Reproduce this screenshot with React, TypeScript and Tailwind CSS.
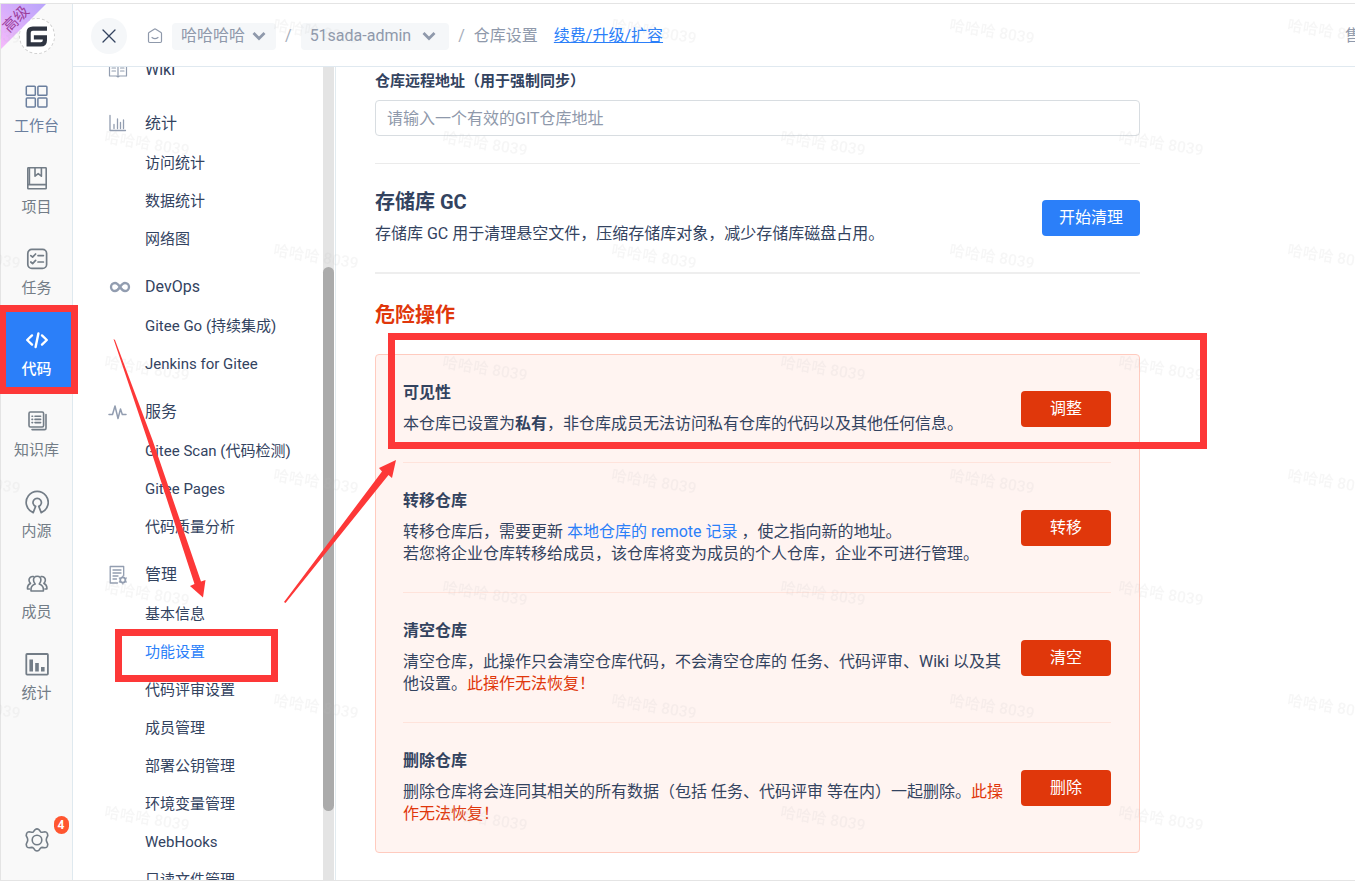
import React from "react";

type IconProps = { className?: string; children: React.ReactNode; box?: number; width?: number };

function Icon({ className = "size-6", children, box = 24, width = 2 }: IconProps) {
  return (
    <svg
      viewBox={`0 0 ${box} ${box}`}
      className={className}
      fill="none"
      stroke="currentColor"
      strokeWidth={width}
      strokeLinecap="round"
      strokeLinejoin="round"
      aria-hidden="true"
    >
      {children}
    </svg>
  );
}

const railItems = [
  {
    label: "工作台",
    tone: "text-[#6b7f9e]",
    icon: (
      <Icon width={1.5}>
        <rect x="1.3" y="1.3" width="9" height="9" rx="0.8" />
        <rect x="12.900" y="1.3" width="9" height="9" rx="0.8" />
        <rect x="1.3" y="12.900" width="9" height="9" rx="0.8" />
        <rect x="12.900" y="12.900" width="9" height="9" rx="0.8" />
      </Icon>
    ),
  },
  {
    label: "项目",
    tone: "text-[#737d87]",
    icon: (
      <Icon width={1.6}>
        <rect x="2.8" y="1.8" width="18.4" height="21" rx="0.6" />
        <path d="M4.4 2v16.5M2.8 18.6h18.4" />
        <path d="M10 2v8.2l3.2-2.6 3.2 2.6V2" />
      </Icon>
    ),
  },
  {
    label: "任务",
    tone: "text-[#737d87]",
    icon: (
      <Icon width={1.7}>
        <rect x="2.8" y="2.4" width="18.8" height="19" rx="4" />
        <path d="M5.8 8.6l1.8 1.6 3-3.2M13 8.6h5.4M5.8 15l1.8 1.6 3-3.2M13 15h5.4" />
      </Icon>
    ),
  },
  {
    label: "代码",
    tone: "bg-[#2b7ff9] font-medium text-white",
    icon: (
      <Icon width={2.4}>
        <path d="M7 7.4L2.2 12 7 16.6M17 7.4l4.8 4.6L17 16.6M13.4 5.4l-2.8 13.6" />
      </Icon>
    ),
  },
  {
    label: "知识库",
    tone: "text-[#737d87]",
    icon: (
      <Icon width={1.6}>
        <rect x="4" y="3" width="14.6" height="15" rx="1.4" />
        <path d="M21 5.6v13.6q0 1.4-1.4 1.4H7" />
        <path d="M7 7.2h.6M10 7.2h5.6M7 10.4h.6M10 10.4h5.6M7 13.6h.6M10 13.6h5.6" />
      </Icon>
    ),
  },
  {
    label: "内源",
    tone: "text-[#737d87]",
    icon: (
      <Icon width={1.7}>
        <path d="M8.2 22.8A11 11 0 1 1 16.2 22.8L13.8 16.6A4.2 4.2 0 1 0 10.6 16.6Z" transform="translate(0 -0.2)" />
      </Icon>
    ),
  },
  {
    label: "成员",
    tone: "text-[#737d87]",
    icon: (
      <Icon width={1.6}>
        <path d="M12.2 5.2c2.3 0 3.7 1.8 3.7 3.9 0 1.7-.8 3-1.7 3.9 2.8 1 4.2 3 4.2 5.4v1.600H6v-1.600c0-2.400 1.400-4.400 4.200-5.400-.9-.9-1.700-2.200-1.700-3.900 0-2.100 1.400-3.900 3.700-3.900z" />
        <path d="M8.300 5.600c-2.400-.4-4.300 1.200-4.300 3.500 0 1.400.6 2.500 1.500 3.300-1.900.8-3 2.500-3 4.400v1.200h2M16.100 5.600c2.400-.4 4.300 1.200 4.300 3.500 0 1.400-.6 2.500-1.500 3.300 1.900.8 3 2.500 3 4.400v1.200h-2" />
      </Icon>
    ),
  },
  {
    label: "统计",
    tone: "text-[#737d87]",
    icon: (
      <Icon width={1.800}>
        <rect x="1.300" y="2" width="21.600" height="20.600" rx="0.800" />
        <path d="M6.200 7.600v11.800M12 11v8.400M17.800 15v4.400" strokeWidth="3.600" strokeLinecap="butt" />
      </Icon>
    ),
  },
];

type Group = { title: string; icon: React.ReactNode; items: string[]; spacing?: string };

const menuGroups: Group[] = [
  {
    title: "Wiki",
    spacing: "mb-[5px]",
    icon: (
      <Icon className="size-5" box={20} width={1.2}>
        <path d="M10 4.500v12M1.500 4h7L10 5l1.500-1h7v12h-7L10 17l-1.500-1h-7zM4 8h3.500M4 11h3.500M12.500 8H16M12.500 11H16" />
      </Icon>
    ),
    items: [],
  },
  {
    title: "统计",
    icon: (
      <Icon className="size-5" box={20} width={1.3}>
        <path d="M2 1.500v15h15.500M6 14.500v-4M9.500 14.500V5M12.500 14.500V8.500M15.500 14.500V6" />
      </Icon>
    ),
    items: ["访问统计", "数据统计", "网络图"],
  },
  {
    title: "DevOps",
    icon: (
      <Icon className="h-5 w-6" width={2.800}>
        <path d="M12 12C9.500 8.200 8 7.200 6 7.200a4.800 4.800 0 0 0 0 9.600c2 0 3.500-1 6-4.800s4-4.800 6-4.800a4.800 4.800 0 0 1 0 9.600c-2 0-3.500-1-6-4.800z" />
      </Icon>
    ),
    items: ["Gitee Go (持续集成)", "Jenkins for Gitee"],
  },
  {
    title: "服务",
    icon: (
      <Icon className="size-5" box={20} width={1.500}>
        <path d="M1 12.500h3.500L7 4l3 12.500L12.500 7l1.800 5.500H18" />
      </Icon>
    ),
    items: ["Gitee Scan (代码检测)", "Gitee Pages", "代码质量分析"],
  },
  {
    title: "管理",
    icon: (
      <Icon className="size-5" box={20} width={1.300}>
        <path d="M9.500 18H2.200V1.500h13.500v9M5 5h8M5 8h8M5 11h5M5 14h3.500" />
        <circle cx="14.800" cy="15" r="2.600" strokeWidth="1.800" />
        <path d="M14.800 11.400v-.3M14.800 18.600v.3M11.600 13.200l-.3-.2M18 16.800l.3.2M11.600 16.800l-.3.2M18 13.200l.3-.2" />
      </Icon>
    ),
    items: [
      "基本信息",
      "功能设置",
      "代码评审设置",
      "成员管理",
      "部署公钥管理",
      "环境变量管理",
      "WebHooks",
      "只读文件管理",
    ],
  },
];

const activeItem = "功能设置";

const dangerRows = [
  {
    title: "可见性",
    action: "调整",
    body: (
      <>
        本仓库已设置为<b className="font-bold">私有</b>，非仓库成员无法访问私有仓库的代码以及其他任何信息。
      </>
    ),
  },
  {
    title: "转移仓库",
    action: "转移",
    body: (
      <>
        转移仓库后，需要更新{" "}
        <a href="#remote" className="text-[#2b7ff9]">
          本地仓库的 remote 记录
        </a>{" "}
        ，使之指向新的地址。
        <br />
        若您将企业仓库转移给成员，该仓库将变为成员的个人仓库，企业不可进行管理。
      </>
    ),
  },
  {
    title: "清空仓库",
    action: "清空",
    body: (
      <>
        清空仓库，此操作只会清空仓库代码，不会清空仓库的 任务、代码评审、Wiki 以及其他设置。
        <span className="text-[#e0370b]">此操作无法恢复！</span>
      </>
    ),
  },
  {
    title: "删除仓库",
    action: "删除",
    body: (
      <>
        删除仓库将会连同其相关的所有数据（包括 任务、代码评审 等在内）一起删除。
        <span className="text-[#e0370b]">此操作无法恢复！</span>
      </>
    ),
  },
];

function Chevron() {
  return (
    <Icon className="h-4 w-4" box={16} width={2.800}>
      <path d="M2.500 5l5.500 5.500L13.500 5" strokeLinecap="butt" strokeLinejoin="miter" />
    </Icon>
  );
}

function Rail() {
  return (
    <aside className="relative flex w-[72px] shrink-0 flex-col border-r border-[#dfe9ef] bg-[#f9f9f9]">
      <div className="flex h-[62px] shrink-0 items-center justify-center pt-0.5">
        <a
          href="#home"
          aria-label="Gitee"
          className="flex size-9 items-center justify-center rounded-full border border-dashed border-[#d0d0d0] bg-white"
        >
          <svg viewBox="0 0 20 20" className="size-[21px]" fill="none" stroke="#2f3542" strokeWidth="4" aria-hidden="true">
            <path d="M20 2.500H6.500Q2.500 2.500 2.500 6.500V17.500H14Q18 17.500 18 13.500V10.800H7.500" />
          </svg>
        </a>
      </div>
      <svg className="absolute top-0 left-0 size-[46px]" viewBox="0 0 46 46">
        <defs>
          <linearGradient id="ribbon" x1="0" y1="1" x2="1" y2="0">
            <stop offset="0" stopColor="#f6b9fb" />
            <stop offset="1" stopColor="#b8a4fb" />
          </linearGradient>
        </defs>
        <polygon points="0,0 45,0 0,45" fill="url(#ribbon)" />
        <text
          x="15"
          y="20"
          transform="rotate(-45 15 15)"
          textAnchor="middle"
          fontSize="15"
          fill="#9c409c"
        >
          高级
        </text>
      </svg>
      <nav className="flex flex-col">
        {railItems.map((item) => (
          <a
            key={item.label}
            href={`#${item.label}`}
            className={`flex h-[81px] flex-col items-center gap-[7px] pt-[19px] text-[15px] leading-5 ${item.tone}`}
          >
            {item.icon}
            {item.label}
          </a>
        ))}
      </nav>
      <button type="button" aria-label="设置" className="relative mx-auto mt-auto mb-7 text-[#737d87]">
        <Icon width={1.600}>
          <path d="M10.200 1.600Q12 .2 13.800 1.600L15.600 3.800Q16.400 4.400 17.400 4.200L20 3.800Q21.800 3.900 22.400 5.600L22.800 7.600 21.600 10.200Q21 12 21.600 13.400L22.800 16.200 22.400 18.200Q21.800 19.800 20 19.800L17.200 19.400Q16.200 19.400 15.400 20.200L13.800 22.400Q12 23.600 10.200 22.400L8.600 20.200Q7.800 19.400 6.800 19.400L4 19.800Q2.200 19.800 1.600 18.200L1.200 16.200 2.400 13.400Q3 12 2.400 10.200L1.200 7.600 1.600 5.600Q2.200 3.900 4 3.800L6.600 4.200Q7.600 4.400 8.400 3.800Z" />
          <circle cx="12" cy="12" r="4.800" />
        </Icon>
        <span className="absolute -top-3 left-[29px] flex h-[18px] w-[15px] items-center justify-center rounded-full bg-[#ff5630] text-[12px] font-bold text-white">
          4
        </span>
      </button>
    </aside>
  );
}

function TopBar() {
  return (
    <header className="flex h-[63px] shrink-0 items-center overflow-hidden border-b border-[#e0e9f0] pt-0.5 pl-[18px] text-base whitespace-nowrap text-[#8f99ab]">
      <button
        type="button"
        aria-label="关闭"
        className="flex size-9 items-center justify-center rounded-full bg-[#f5f7f9] text-[#33435f]"
      >
        <Icon className="size-4" box={16} width={1.300}>
          <path d="M2 2l12 12M14 2L2 14" />
        </Icon>
      </button>
      <a href="#home" aria-label="主页" className="ml-5">
        <Icon className="size-4" box={16} width={1.200}>
          <path d="M1.500 5.400Q1.500 4.800 2 4.400L7.200 1.200Q8 .7 8.800 1.200L14 4.400Q14.500 4.800 14.500 5.400v7.900q0 1.200-1.200 1.200H2.700q-1.200 0-1.200-1.200zM5 9.500q3 2.400 6 0" />
        </Icon>
      </a>
      <button type="button" className="ml-[9px] flex h-[27px] items-center gap-1.5 rounded bg-[#f5f7f9] px-[9px]">
        哈哈哈哈 <Chevron />
      </button>
      <span className="px-[9px] text-[#a5adba]">/</span>
      <button type="button" className="flex h-[27px] items-center gap-2.5 rounded bg-[#f5f7f9] pr-3 pl-[9px]">
        51sada-admin <Chevron />
      </button>
      <span className="px-[9px] text-[#a5adba]">/</span>
      <span>仓库设置</span>
      <a href="#upgrade" className="ml-4 text-[#2b7ff9] underline">
        续费/升级/扩容
      </a>
      <span className="-mr-1.5 ml-auto">售</span>
    </header>
  );
}

function SideMenu() {
  return (
    <div className="flex w-[263px] shrink-0 overflow-hidden border-r border-[#e2ebf0]">
      <nav className="-mt-[26px] flex w-[250px] shrink-0 flex-col text-[#33435f]">
        {menuGroups.map((group) => (
          <section key={group.title} className={`mt-[9px] ${group.spacing ?? ""}`}>
            <h3 className="flex h-10 items-center text-base">
              <span className="flex w-[72px] pl-[35px] text-[#929db0]">{group.icon}</span>
              {group.title}
            </h3>
            {group.items.map((item) => (
              <a
                key={item}
                href={`#${item}`}
                className={`flex h-[38px] items-center pl-[72px] text-[15px] ${item === activeItem ? "text-[#2b7ff9]" : ""}`}
              >
                {item}
              </a>
            ))}
          </section>
        ))}
      </nav>
      <div className="flex w-[11px] flex-col bg-[#e4e4e4] pt-[200px]" aria-hidden="true">
        <div className="h-[544px] rounded-full bg-[#ababab]" />
      </div>
    </div>
  );
}

function Settings() {
  return (
    <main className="min-w-0 flex-1 overflow-hidden pt-0.5 pr-5 pl-[39px] text-[#33435f]">
      <div className="max-w-[765px]">
        <label htmlFor="remote-url" className="block text-[15px] leading-6 font-bold">
          仓库远程地址（用于强制同步）
        </label>
        <input
          id="remote-url"
          type="text"
          placeholder="请输入一个有效的GIT仓库地址"
          className="mt-[7px] block h-9 w-full rounded border border-[#d8dde1] bg-white px-[11px] text-base outline-none placeholder:text-[#8f99ab]"
        />
        <section className="mt-[27px] flex items-start justify-between border-t border-[#ebebeb] pt-6">
          <div>
            <h2 className="text-xl leading-7 font-bold">存储库 GC</h2>
            <p className="mt-1.5 text-base leading-6">
              存储库 GC 用于清理悬空文件，压缩存储库对象，减少存储库磁盘占用。
            </p>
          </div>
          <button type="button" className="mt-3 h-9 rounded bg-[#2b7ff9] px-[17px] text-base text-white">
            开始清理
          </button>
        </section>
        <hr className="mt-[26px] border-t-2 border-[#eeeeee]" />
        <h2 className="mt-[27px] text-xl leading-7 font-bold text-[#e0370b]">危险操作</h2>
        <section className="mt-[25px] rounded border border-[#ffcbbf] bg-[#fff4f1] pr-7 pl-[27px]">
          {dangerRows.map((row) => (
            <div
              key={row.title}
              className="flex items-center gap-2 border-b border-[#ffe3db] last:border-b-0"
            >
              <div className="flex-1 pt-[26px] pb-[27px]">
                <h3 className="text-base leading-6 font-bold">{row.title}</h3>
                <p className="mt-2 text-base leading-[22px]">{row.body}</p>
              </div>
              <button type="button" className="h-9 w-[90px] shrink-0 rounded bg-[#e0370b] text-base text-white">
                {row.action}
              </button>
            </div>
          ))}
        </section>
      </div>
    </main>
  );
}

function Watermark() {
  return (
    <svg className="pointer-events-none absolute inset-0 h-full w-full" aria-hidden="true">
      <defs>
        <pattern id="watermark" x="69" y="0" width="338" height="225" patternUnits="userSpaceOnUse">
          <g fill="#bbbbbb" fillOpacity="0.13" fontSize="15.500" textAnchor="middle" fontWeight="500">
            <text x="78" y="149" transform="rotate(9 78 143)">哈哈哈 8039</text>
            <text x="247" y="37" transform="rotate(9 247 31)">哈哈哈 8039</text>
          </g>
        </pattern>
      </defs>
      <rect width="100%" height="100%" fill="url(#watermark)" />
    </svg>
  );
}

function Annotations() {
  return (
    <svg
      className="pointer-events-none absolute top-0 left-0 h-[881px] w-[1355px]"
      viewBox="0 0 1355 881"
      fill="none"
      stroke="#fd3838"
      strokeWidth="7"
      aria-hidden="true"
    >
      <rect x="2.500" y="308.500" width="72" height="82" />
      <rect x="118.500" y="632.500" width="156" height="46" />
      <rect x="391.500" y="336.500" width="812" height="109" />
      <g fill="#fd3838" stroke="none">
        <polygon points="113.500,339 115,340 152.500,440 201,581.500 205.500,580 203,597.500 190,586 194.500,584 147.500,440" />
        <polygon points="284,602 382,471.500 379,468 396,460 392,478 388.500,475 285.500,603" />
      </g>
    </svg>
  );
}

export default function App() {
  return (
    <div className="relative h-screen overflow-hidden bg-white pt-[3px] font-['Roboto','Noto_Sans_CJK_SC',sans-serif]">
      <div className="flex h-full border border-r-0 border-[#e4e4e4]">
        <Rail />
        <div className="flex min-w-0 flex-1 flex-col">
          <TopBar />
          <div className="flex min-h-0 flex-1">
            <SideMenu />
            <Settings />
          </div>
        </div>
      </div>
      <Watermark />
      <Annotations />
    </div>
  );
}
